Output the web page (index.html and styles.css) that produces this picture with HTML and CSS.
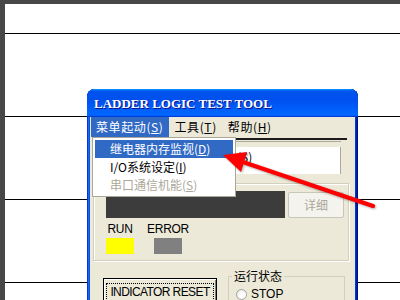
FILE: index.html
```html
<!DOCTYPE html>
<html lang="zh-CN">
<head>
    <meta charset="UTF-8">
    <title>LADDER LOGIC TEST TOOL</title>
    <link rel="stylesheet" href="styles.css">
</head>
<body>
    <!-- ruled sheet behind the dialog -->
    <div class="sheet">
        <div class="row first"></div>
        <div class="row"></div>
        <div class="row"></div>
        <div class="row"></div>
    </div>

    <!-- Dialog window -->
    <div class="window">
        <div class="titlebar">LADDER LOGIC TEST TOOL</div>
        <div class="client">
            <div class="menubar">
                <span class="menu-item open">菜单起动(<u>S</u>)</span>
                <span class="menu-item">工具(<u>T</u>)</span>
                <span class="menu-item">帮助(<u>H</u>)</span>
            </div>
            <div class="rule"></div>
            <div class="port-frame">
                <div class="port-box">(<u>S</u>)</div>
            </div>
            <div class="monitor">
                <div class="monitor-top">
                    <div class="display"></div>
                    <div class="btn-detail">详细</div>
                </div>
                <div class="indicators">
                    <div class="indicator">
                        <span>RUN</span>
                        <div class="lamp run"></div>
                    </div>
                    <div class="indicator">
                        <span>ERROR</span>
                        <div class="lamp error"></div>
                    </div>
                </div>
            </div>
            <div class="bottom">
                <div class="reset-btn"><span>INDICATOR RESET</span></div>
                <fieldset class="status">
                    <legend>运行状态</legend>
                    <div class="radio"><span class="radio-dot"></span>STOP</div>
                </fieldset>
            </div>
        </div>

        <!-- open menu -->
        <ul class="dropdown">
            <li class="active">继电器内存监视(<u>D</u>)</li>
            <li>I/O系统设定(<u>I</u>)</li>
            <li class="disabled">串口通信机能(<u>S</u>)</li>
        </ul>
    </div>

    <!-- red pointer arrow -->
    <svg class="arrow" width="400" height="300" viewBox="0 0 400 300">
        <line x1="240" y1="161" x2="373" y2="206" stroke="#ff0000" stroke-width="4" stroke-linecap="round"/>
        <polygon points="223,155 247,152 241,172" fill="#ff0000"/>
    </svg>
</body>
</html>
```

FILE: styles.css
```css
html, body {
    margin: 0;
    height: 300px;
    overflow: hidden;
}

body {
    position: relative;
    background-color: #474747;
    font-family: "Liberation Sans", "Noto Sans CJK SC", sans-serif;
    color: #000;
}

.sheet {
    margin: 4px 0 0 5px;
    height: 296px;
    background-color: #fff;
}

.sheet .row {
    height: 82px;
    border-bottom: 1px solid #000;
}

.sheet .row.first {
    height: 29px;
}

/* window frame */
.window {
    position: absolute;
    left: 87px;
    top: 89px;
    width: 271px;
    height: 215px;
    box-sizing: border-box;
    padding: 0 3px;
    background-color: #0831d9;
    border-radius: 8px 8px 0 0;
    box-shadow: inset -1px 0 #00138c, inset 1px 0 #0831d9, inset -2px 0 #001ea0,
                inset 2px 0 #166aee, inset -3px 0 #003bda, inset 3px 0 #0855dd;
}

.titlebar {
    margin: 0 -3px;
    height: 28px;
    padding-left: 7px;
    line-height: 29px;
    border-radius: 8px 8px 0 0;
    background: linear-gradient(to bottom, #0997ff 0%, #0053ee 8%, #0050ee 40%, #0066ff 88%, #0066ff 93%, #005bff 95%, #003dd7 96%, #003dd7 100%);
    color: #fff;
    font-family: "Liberation Serif", serif;
    font-weight: bold;
    font-size: 13px;
    letter-spacing: 0;
    text-shadow: 1px 1px #0f1089;
}

.client {
    height: 187px;
    background-color: #ece9d8;
}

.menubar {
    display: flex;
    height: 20px;
    padding-left: 1px;
    font-family: "Noto Sans CJK SC", sans-serif;
    font-size: 12px;
}

.menu-item {
    padding: 0 6px 0 5px;
    line-height: 20px;
    letter-spacing: 0.6px;
}

.menu-item.open {
    background-color: #316ac5;
    color: #fff;
}

.rule {
    margin: 1px 8px 0 2px;
    border-top: 2px solid #1c1c1c;
}

.port-frame {
    margin: 1px 14px 0 2px;
    padding: 5px 0 0 8px;
    border-top: 1px solid #aca899;
}

.port-box {
    height: 27px;
    box-sizing: border-box;
    padding: 1px 0 0 137px;
    line-height: 18px;
    background-color: #fff;
    border-right: 1px solid #aca899;
    font-family: "Noto Sans CJK SC", sans-serif;
    font-size: 12px;
}

.monitor {
    margin: 9px 6px 0 3px;
    height: 78px;
    box-sizing: border-box;
    padding: 7px 4px 0 12px;
    border: 1px solid #d0d0bf;
    box-shadow: inset 1px 1px #fff, 1px 1px #fff;
}

.monitor-top {
    display: flex;
    gap: 3px;
}

.display {
    width: 179px;
    height: 27px;
    background-color: #3c3c3c;
}

.btn-detail {
    width: 56px;
    height: 26px;
    margin-top: 1px;
    box-sizing: border-box;
    border: 1px solid #c9c7ba;
    border-radius: 2px;
    background-color: #f4f3ee;
    color: #aca899;
    text-align: center;
    line-height: 24px;
    font-family: "Noto Sans CJK SC", sans-serif;
    font-size: 12px;
}

.indicators {
    display: flex;
    gap: 20px;
    margin-top: 4px;
}

.indicator {
    width: 28px;
    display: flex;
    flex-direction: column;
    align-items: center;
}

.indicator span {
    font-size: 12px;
    line-height: 14px;
    letter-spacing: -0.3px;
    white-space: nowrap;
}

.lamp {
    width: 28px;
    height: 16px;
    margin-top: 2px;
}

.lamp.run {
    background-color: #ffff00;
}

.lamp.error {
    background-color: #808080;
}

.bottom {
    display: flex;
    align-items: flex-start;
    margin-top: 7px;
}

.reset-btn {
    width: 114px;
    height: 28px;
    margin: 10px 0 0 13px;
    box-sizing: border-box;
    padding: 4px 2px 0;
    border: 1px solid #000;
    background-color: #ece9d8;
    box-shadow: inset 1px 1px #fff, inset -1px -1px #808080;
}

.reset-btn span {
    display: block;
    border: 1px dotted #000;
    text-align: center;
    font-size: 12px;
    line-height: 16px;
    letter-spacing: -0.6px;
    white-space: nowrap;
}

.status {
    width: 117px;
    box-sizing: border-box;
    margin: 0 0 0 11px;
    padding: 0 3px 8px;
    border: 1px solid #d0d0bf;
    min-inline-size: 0;
}

.status legend {
    padding: 0 2px;
    font-family: "Noto Sans CJK SC", sans-serif;
    font-size: 12px;
    line-height: 16px;
}

.radio {
    display: flex;
    align-items: center;
    gap: 4px;
    margin: 4px 0 0 4px;
    font-size: 12px;
    line-height: 12px;
}

.radio-dot {
    width: 11px;
    height: 11px;
    box-sizing: border-box;
    border-radius: 50%;
    border: 1px solid #a4a49c;
    background: radial-gradient(circle at 65% 65%, #fff 40%, #dcdcd4 100%);
}

/* open menu */
.dropdown {
    position: absolute;
    left: 5px;
    top: 48px;
    width: 144px;
    height: 60px;
    box-sizing: border-box;
    margin: 0;
    padding: 2px;
    list-style: none;
    border: 1px solid #aca899;
    background-color: #fff;
    font-family: "Noto Sans CJK SC", sans-serif;
    font-size: 12px;
}

.dropdown li {
    height: 18px;
    padding-left: 15px;
    line-height: 17px;
}

.dropdown li.active {
    background-color: #316ac5;
    color: #fff;
}

.dropdown li.disabled {
    color: #aca899;
}

.arrow {
    position: absolute;
    left: 0;
    top: 0;
    pointer-events: none;
    filter: drop-shadow(1px 1px 1px rgba(0, 0, 0, 0.35));
}
```
